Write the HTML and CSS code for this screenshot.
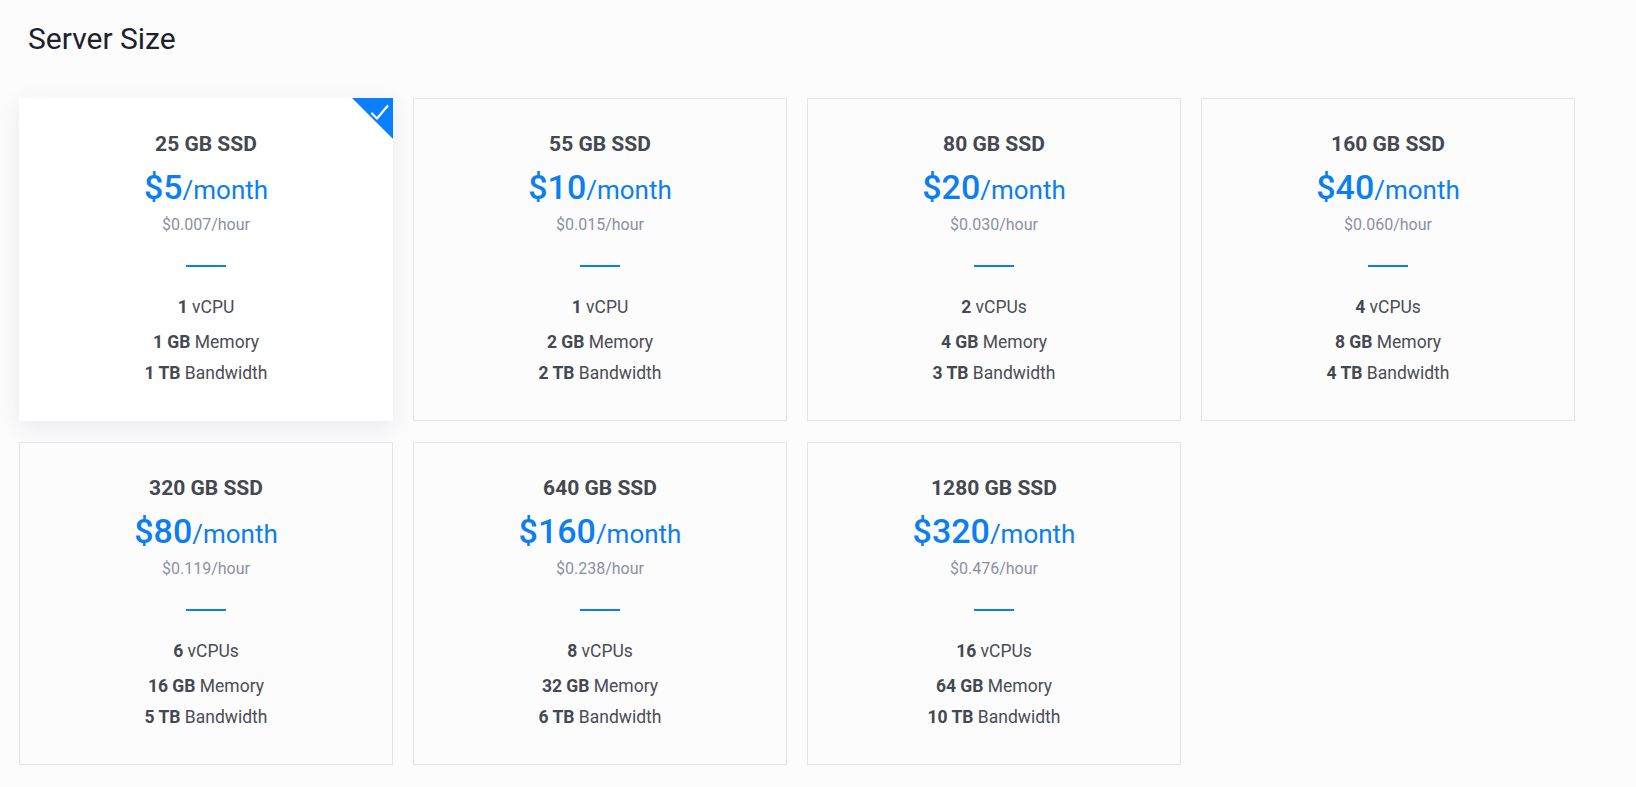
FILE: index.html
```html
<!DOCTYPE html>
<html>
<head>
<meta charset="utf-8">
<title>Server Size</title>
<link rel="stylesheet" href="styles.css">
</head>
<body>
<div class="page">
  <h2 class="section-title">Server Size</h2>

  <div class="size-grid">
    <div class="size-card selected">
      <svg class="selected-mark" width="41" height="41" viewBox="0 0 41 41">
        <polygon points="0,0 41,0 41,41" fill="#0a80ff"/>
        <polyline points="20,15.5 25,20.5 35.5,8" fill="none" stroke="#fff" stroke-width="2.2" stroke-linecap="round" stroke-linejoin="round"/>
      </svg>
      <div class="disk">25 GB SSD</div>
      <div class="price"><span class="amount">$5</span>/month</div>
      <div class="hourly">$0.007/hour</div>
      <div class="divider"></div>
      <div class="spec cpu"><b>1</b> vCPU</div>
      <div class="spec memory"><b>1 GB</b> Memory</div>
      <div class="spec"><b>1 TB</b> Bandwidth</div>
    </div>

    <div class="size-card">
      <div class="disk">55 GB SSD</div>
      <div class="price"><span class="amount">$10</span>/month</div>
      <div class="hourly">$0.015/hour</div>
      <div class="divider"></div>
      <div class="spec cpu"><b>1</b> vCPU</div>
      <div class="spec memory"><b>2 GB</b> Memory</div>
      <div class="spec"><b>2 TB</b> Bandwidth</div>
    </div>

    <div class="size-card">
      <div class="disk">80 GB SSD</div>
      <div class="price"><span class="amount">$20</span>/month</div>
      <div class="hourly">$0.030/hour</div>
      <div class="divider"></div>
      <div class="spec cpu"><b>2</b> vCPUs</div>
      <div class="spec memory"><b>4 GB</b> Memory</div>
      <div class="spec"><b>3 TB</b> Bandwidth</div>
    </div>

    <div class="size-card">
      <div class="disk">160 GB SSD</div>
      <div class="price"><span class="amount">$40</span>/month</div>
      <div class="hourly">$0.060/hour</div>
      <div class="divider"></div>
      <div class="spec cpu"><b>4</b> vCPUs</div>
      <div class="spec memory"><b>8 GB</b> Memory</div>
      <div class="spec"><b>4 TB</b> Bandwidth</div>
    </div>

    <div class="size-card">
      <div class="disk">320 GB SSD</div>
      <div class="price"><span class="amount">$80</span>/month</div>
      <div class="hourly">$0.119/hour</div>
      <div class="divider"></div>
      <div class="spec cpu"><b>6</b> vCPUs</div>
      <div class="spec memory"><b>16 GB</b> Memory</div>
      <div class="spec"><b>5 TB</b> Bandwidth</div>
    </div>

    <div class="size-card">
      <div class="disk">640 GB SSD</div>
      <div class="price"><span class="amount">$160</span>/month</div>
      <div class="hourly">$0.238/hour</div>
      <div class="divider"></div>
      <div class="spec cpu"><b>8</b> vCPUs</div>
      <div class="spec memory"><b>32 GB</b> Memory</div>
      <div class="spec"><b>6 TB</b> Bandwidth</div>
    </div>

    <div class="size-card">
      <div class="disk">1280 GB SSD</div>
      <div class="price"><span class="amount">$320</span>/month</div>
      <div class="hourly">$0.476/hour</div>
      <div class="divider"></div>
      <div class="spec cpu"><b>16</b> vCPUs</div>
      <div class="spec memory"><b>64 GB</b> Memory</div>
      <div class="spec"><b>10 TB</b> Bandwidth</div>
    </div>
  </div>
</div>
</body>
</html>
```

FILE: styles.css
```css
html, body {
  margin: 0;
  padding: 0;
  background-color: #fcfcfd;
  font-family: Roboto, "Liberation Sans", sans-serif;
  color: #444850;
}
.page {
  padding: 21px 0 0 19px;
}
.section-title {
  margin: 0 0 41px 9px;
  font-size: 30px;
  line-height: 36px;
  font-weight: 400;
  color: #1d2129;
}
.size-grid {
  display: grid;
  grid-template-columns: repeat(4, 374px);
  column-gap: 20px;
  row-gap: 21px;
}
.size-card {
  position: relative;
  box-sizing: border-box;
  border: 1px solid #e4e4ea;
  background-color: #fcfcfd;
  padding: 33px 10px 36px;
  text-align: center;
}
.size-card.selected {
  border-color: #fff;
  background-color: #fff;
  box-shadow: 0 6px 22px rgba(30, 40, 60, 0.09);
}
.selected-mark {
  position: absolute;
  top: -1px;
  right: -1px;
  display: block;
}
.disk {
  font-size: 21px;
  line-height: 24px;
  font-weight: 700;
  color: #444850;
}
.price {
  margin-top: 11px;
  font-size: 26px;
  line-height: 40px;
  color: #0b7ef2;
}
.price .amount {
  font-size: 34px;
  font-weight: 500;
}
.hourly {
  margin-top: 5px;
  font-size: 16px;
  line-height: 20px;
  color: #8b90a2;
}
.divider {
  width: 40px;
  height: 2px;
  margin: 30px auto 29px;
  background-color: #0b7ef2;
}
.spec {
  font-size: 17.5px;
  line-height: 22px;
  margin-top: 9px;
  color: #4a4d55;
}
.spec.cpu {
  margin-top: 0;
}
.spec.memory {
  margin-top: 13px;
}
.spec b {
  font-weight: 700;
  color: #444850;
}
```
